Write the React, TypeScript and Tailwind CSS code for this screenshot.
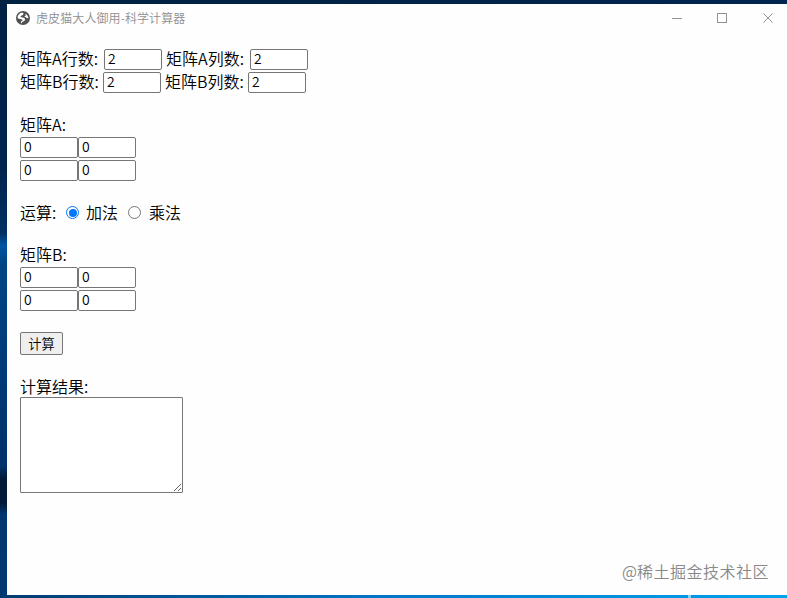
import React from "react";

const field =
  "block h-[21px] w-[58px] shrink-0 rounded-[2px] border border-[#767676] bg-white pl-[3px] pb-[3px] font-['Noto_Sans_CJK_SC',sans-serif] text-[14px] font-[350] leading-[16px] text-black outline-none";

function Field({ value }: { value: string }) {
  return <input className={field} defaultValue={value} />;
}

function Label({ text, width }: { text: string; width: string }) {
  return <span className={`${width} shrink-0 whitespace-nowrap`}>{text}</span>;
}

function Matrix() {
  return (
    <div className="flex flex-col gap-[2px]">
      {[0, 1].map((row) => (
        <div key={row} className="flex">
          <Field value="0" />
          <Field value="0" />
        </div>
      ))}
    </div>
  );
}

function TitleBar() {
  return (
    <header className="flex h-[29px] items-center pl-[9px] text-[#999]">
      <svg width="14" height="14" viewBox="0 0 14 14" className="-mt-px shrink-0">
        <circle cx="7" cy="7" r="7" fill="#505050" />
        <path d="M1.500 6.400C1.900 4 3.600 2.100 6.300 1.600L7.600 2.600 6.900 3.900 4.700 5.100 4.600 5.900 8.300 6.900 9.200 8.200 8.300 10 6.200 11.100 5.600 12.300 4.700 11.900 5.300 10.300 6.700 9.200 6.300 8.500 2 7.400Z" fill="#fff" />
        <path d="M9.300 2.700C11.200 3.700 12.400 5.300 12.500 7.300L10.900 7.100 9.200 6.100 8.300 5.200 9.800 4.400Z" fill="#fff" />
      </svg>
      <h1 className="-mt-[2px] ml-[6px] grow whitespace-nowrap text-[12px] font-[350] leading-4 tracking-[0.1px] text-[#909090]">虎皮猫大人御用-科学计算器</h1>
      <svg width="102" height="12" viewBox="0 0 102 12" fill="none" stroke="#929292" className="-mt-px mr-[13px] shrink-0">
        <path d="M0 6.500h10M45.500 1.500h9v9h-9z" shapeRendering="crispEdges" />
        <path d="m91.500 1.500 9 9m0-9-9 9" />
      </svg>
    </header>
  );
}

export default function App() {
  return (
    <div className="h-[598px] w-[787px] overflow-hidden bg-[linear-gradient(180deg,#002044_0%,#00224d_28%,#003063_39%,#0055a0_41%,#004584_44%,#003b78_60%,#003168_78%,#001a38_80%,#001a38_84%,#00366d_86%,#003970_100%)] font-['Noto_Sans_CJK_SC',sans-serif]">
      <div className="flex h-[598px] flex-col">
        <div className="h-1 shrink-0 bg-gradient-to-r from-[#00213f] to-[#002550]" />
        <main className="ml-[7px] h-[591px] shrink-0 bg-[#fefefe]">
          <TitleBar />
          <div className="flex flex-col items-start pl-[13px] pt-[16px] text-[16px] font-[350] leading-[19px] text-black">
            <div className="flex">
              <Label text="矩阵A行数:" width="w-[84px]" />
              <Field value="2" />
              <span className="w-1" />
              <Label text="矩阵A列数:" width="w-[84px]" />
              <Field value="2" />
            </div>
            <div className="mt-[2px] flex">
              <Label text="矩阵B行数:" width="w-[83px]" />
              <Field value="2" />
              <span className="w-1" />
              <Label text="矩阵B列数:" width="w-[83px]" />
              <Field value="2" />
            </div>
            <div className="mt-[22px] h-[21px]">矩阵A:</div>
            <div className="mt-px"><Matrix /></div>
            <div className="mt-[22px] flex h-[21px] items-center pb-[2px]">
              <span className="w-[46px]">运算:</span>
              <span className="flex size-[13px] items-center justify-center rounded-full border border-[#0075ff]">
                <span className="size-[8px] rounded-full bg-[#0075ff]" />
              </span>
              <span className="ml-[7px] w-[42px]">加法</span>
              <span className="size-[13px] rounded-full border border-[#767676]" />
              <span className="ml-[8px]">乘法</span>
            </div>
            <div className="mt-[21px] h-[21px]">矩阵B:</div>
            <div className="mt-px"><Matrix /></div>
            <button className="mt-[21px] h-[23px] w-[43px] rounded-[2px] border border-[#767676] bg-[#efefef] text-[13.33px] font-[350] leading-[21px]">计算</button>
            <div className="mt-[22px] h-5">计算结果:</div>
            <textarea className="block h-[96px] w-[163px] resize rounded-[1px] border border-[#767676] bg-white p-[2px] outline-none" />
            <div className="mt-[69px] flex w-full justify-end pr-[18px] text-[16px] text-[#888]">
              <span>@</span>
              <span className="tracking-[0.5px]">稀土掘金技术社区</span>
            </div>
          </div>
        </main>
        <footer className="flex h-[3px] shrink-0 bg-gradient-to-r from-[#003b70] via-[#0078ca] to-[#00a2ed]">
          <span className="ml-[688px] w-[3px] bg-[#7ad7ff]" />
        </footer>
      </div>
    </div>
  );
}
